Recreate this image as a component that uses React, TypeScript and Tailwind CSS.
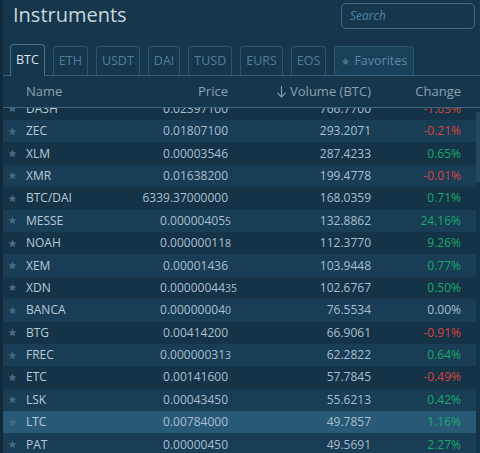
import React from "react";

type Row = {
  name: string;
  price: string;
  small?: string;
  vol: string;
  change: string;
};

const rows: Row[] = [
  { name: "DASH", price: "0.02397100", vol: "766.7700", change: "-1.03%" },
  { name: "ZEC", price: "0.01807100", vol: "293.2071", change: "-0.21%" },
  { name: "XLM", price: "0.00003546", vol: "287.4233", change: "0.65%" },
  { name: "XMR", price: "0.01638200", vol: "199.4778", change: "-0.01%" },
  { name: "BTC/DAI", price: "6339.37000000", vol: "168.0359", change: "0.71%" },
  { name: "MESSE", price: "0.00000405", small: "5", vol: "132.8862", change: "24.16%" },
  { name: "NOAH", price: "0.00000011", small: "8", vol: "112.3770", change: "9.26%" },
  { name: "XEM", price: "0.00001436", vol: "103.9448", change: "0.77%" },
  { name: "XDN", price: "0.00000044", small: "35", vol: "102.6767", change: "0.50%" },
  { name: "BANCA", price: "0.00000004", small: "0", vol: "76.5534", change: "0.00%" },
  { name: "BTG", price: "0.00414200", vol: "66.9061", change: "-0.91%" },
  { name: "FREC", price: "0.00000031", small: "3", vol: "62.2822", change: "0.64%" },
  { name: "ETC", price: "0.00141600", vol: "57.7845", change: "-0.49%" },
  { name: "LSK", price: "0.00043450", vol: "55.6213", change: "0.42%" },
  { name: "LTC", price: "0.00784000", vol: "49.7857", change: "1.16%" },
  { name: "PAT", price: "0.00000450", vol: "49.5691", change: "2.27%" },
];

const tabs = ["BTC", "ETH", "USDT", "DAI", "TUSD", "EURS", "EOS"];

function Star({ className }: { className?: string }) {
  return (
    <svg viewBox="0 0 24 24" className={className} fill="currentColor">
      <path d="M12 1.5l3.2 6.9 7.3.8-5.4 5 1.5 7.3L12 17.8l-6.6 3.7 1.5-7.3-5.4-5 7.3-.8z" />
    </svg>
  );
}

export default function App() {
  return (
    <div
      className="w-[480px] h-[453px] overflow-hidden flex bg-[#16364b]"
      style={{ fontFamily: '"Open Sans", "Noto Sans", sans-serif' }}
    >
      <div className="w-[3px] shrink-0 bg-[#102a3a]" />
      <div className="flex-1 flex flex-col min-w-0">
        {/* top bar */}
        <div className="h-[31px] shrink-0 flex items-center justify-between pl-[10px] pr-[5px]">
          <div className="text-[20px] leading-none text-[#c9d6df] -mt-[1px]">Instruments</div>
          <div className="w-[134px] h-[26px] rounded-[5px] border border-[#3f6a88] flex items-center pl-[8px]">
            <span className="text-[12px] italic text-[#5583a2]">Search</span>
          </div>
        </div>
        {/* tabs */}
        <div className="h-[45px] shrink-0 flex items-end gap-[8px] pl-[7px] border-b border-[#36607b]">
          {tabs.map((t, i) =>
            i === 0 ? (
              <div
                key={t}
                className="h-[32px] -mb-px px-[5px] flex items-center rounded-t-[4px] border border-b-0 border-[#43708d] bg-[#16364b] text-[12.5px] text-[#d7e2ea]"
              >
                {t}
              </div>
            ) : (
              <div
                key={t}
                className="h-[29px] px-[5px] flex items-center rounded-t-[4px] border border-b-0 border-[#2d5570] text-[12.5px] text-[#4f7f9f]"
              >
                {t}
              </div>
            )
          )}
          <div className="h-[29px] px-[6px] flex items-center gap-[4px] rounded-t-[4px] border border-b-0 border-[#2d5570] bg-[#1a415a] text-[12.5px] text-[#5a89a8]">
            <Star className="w-[9px] h-[9px] text-[#4a6f88]" />
            <span>Favorites</span>
          </div>
        </div>
        {/* header */}
        <div className="h-[32px] shrink-0 flex items-center border-b border-[#3a6480] text-[13px] text-[#8aa1b1]">
          <div className="w-[23px] shrink-0" />
          <div className="w-[110px] shrink-0">Name</div>
          <div className="w-[92px] shrink-0 text-right">Price</div>
          <div className="w-[143px] shrink-0 flex justify-end items-center gap-[3px]">
            <svg viewBox="0 0 12 14" className="w-[11px] h-[13px]" fill="none" stroke="currentColor" strokeWidth="1.2">
              <path d="M6 1v12M1.5 8.5L6 13l4.5-4.5" />
            </svg>
            <span>Volume (BTC)</span>
          </div>
          <div className="w-[90px] shrink-0 text-right">Change</div>
        </div>
        {/* body */}
        <div className="flex-1 flex min-h-0 overflow-hidden">
          <div className="flex-1 min-w-0 overflow-hidden">
            <div className="-mt-[10.4px]">
              {rows.map((r, i) => {
                const hl = r.name === "LTC";
                const bg = hl ? "bg-[#285a77]" : i % 2 === 1 ? "bg-[#183d54]" : "bg-[#153346]";
                const neg = r.change.startsWith("-");
                const zero = r.change === "0.00%";
                const chColor = zero ? "text-[#a9bfcf]" : neg ? "text-[#d9433f]" : "text-[#1ba86b]";
                return (
                  <div key={r.name} className={`h-[22.4px] flex items-center text-[12px] ${bg}`}>
                    <div className="w-[23px] shrink-0 pl-[5px] flex items-center">
                      <Star className="w-[9px] h-[9px] text-[#486a80]" />
                    </div>
                    <div className="w-[110px] shrink-0 text-[#b8cad7]">{r.name}</div>
                    <div className="w-[92px] shrink-0 text-right text-[#a9bfcf] whitespace-nowrap">
                      {r.small ? (
                        <span className="mr-[3px]">
                          {r.price}
                          <span className="inline-block w-0 text-[10.5px] whitespace-nowrap">{r.small}</span>
                        </span>
                      ) : (
                        r.price
                      )}
                    </div>
                    <div className="w-[143px] shrink-0 text-right text-[#a9bfcf]">{r.vol}</div>
                    <div className={`w-[90px] shrink-0 text-right ${chColor}`}>{r.change}</div>
                  </div>
                );
              })}
            </div>
          </div>
          <div className="w-[4px] shrink-0 bg-[#153346] flex flex-col">
            <div className="h-[4px]" />
            <div className="h-[70px] bg-[#23475e]" />
          </div>
        </div>
      </div>
    </div>
  );
}
